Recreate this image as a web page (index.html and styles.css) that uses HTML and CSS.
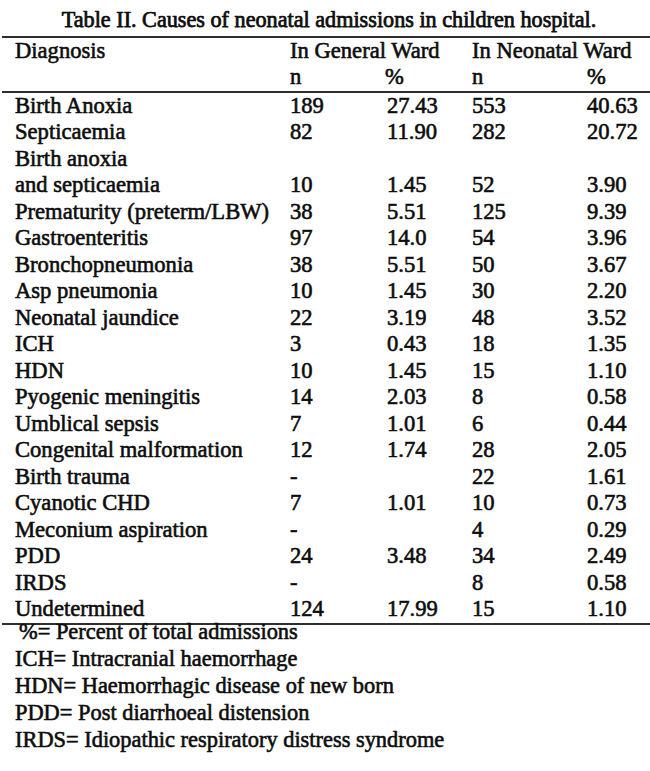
FILE: index.html
```html
<!DOCTYPE html>
<html>
<head>
<meta charset="utf-8">
<link rel="stylesheet" href="styles.css">
</head>
<body>
<div class="page">
  <h1 class="title">Table II. Causes of neonatal admissions in children hospital.</h1>
  <table class="data">
    <colgroup>
      <col class="c1"><col class="c2"><col class="c3"><col class="c4"><col class="c5">
    </colgroup>
    <thead>
      <tr><td class="diag">Diagnosis</td><td colspan="2">In General Ward</td><td colspan="2" class="nw">In Neonatal Ward</td></tr>
      <tr class="sub"><td class="diag"></td><td>n</td><td class="pct">%</td><td class="nw">n</td><td class="pct2">%</td></tr>
    </thead>
    <tbody>
      <tr><td class="diag">Birth Anoxia</td><td>189</td><td>27.43</td><td class="nw">553</td><td>40.63</td></tr>
      <tr><td class="diag">Septicaemia</td><td>82</td><td>11.90</td><td class="nw">282</td><td>20.72</td></tr>
      <tr><td class="diag">Birth anoxia</td><td></td><td></td><td></td><td></td></tr>
      <tr><td class="diag">and septicaemia</td><td>10</td><td>1.45</td><td class="nw">52</td><td>3.90</td></tr>
      <tr><td class="diag">Prematurity (preterm/LBW)</td><td>38</td><td>5.51</td><td class="nw">125</td><td>9.39</td></tr>
      <tr><td class="diag">Gastroenteritis</td><td>97</td><td>14.0</td><td class="nw">54</td><td>3.96</td></tr>
      <tr><td class="diag">Bronchopneumonia</td><td>38</td><td>5.51</td><td class="nw">50</td><td>3.67</td></tr>
      <tr><td class="diag">Asp pneumonia</td><td>10</td><td>1.45</td><td class="nw">30</td><td>2.20</td></tr>
      <tr><td class="diag">Neonatal jaundice</td><td>22</td><td>3.19</td><td class="nw">48</td><td>3.52</td></tr>
      <tr><td class="diag">ICH</td><td>3</td><td>0.43</td><td class="nw">18</td><td>1.35</td></tr>
      <tr><td class="diag">HDN</td><td>10</td><td>1.45</td><td class="nw">15</td><td>1.10</td></tr>
      <tr><td class="diag">Pyogenic meningitis</td><td>14</td><td>2.03</td><td class="nw">8</td><td>0.58</td></tr>
      <tr><td class="diag">Umblical sepsis</td><td>7</td><td>1.01</td><td class="nw">6</td><td>0.44</td></tr>
      <tr><td class="diag">Congenital malformation</td><td>12</td><td>1.74</td><td class="nw">28</td><td>2.05</td></tr>
      <tr><td class="diag">Birth trauma</td><td>-</td><td></td><td class="nw">22</td><td>1.61</td></tr>
      <tr><td class="diag">Cyanotic CHD</td><td>7</td><td>1.01</td><td class="nw">10</td><td>0.73</td></tr>
      <tr><td class="diag">Meconium aspiration</td><td>-</td><td></td><td class="nw">4</td><td>0.29</td></tr>
      <tr><td class="diag">PDD</td><td>24</td><td>3.48</td><td class="nw">34</td><td>2.49</td></tr>
      <tr><td class="diag">IRDS</td><td>-</td><td></td><td class="nw">8</td><td>0.58</td></tr>
      <tr><td class="diag">Undetermined</td><td>124</td><td>17.99</td><td class="nw">15</td><td>1.10</td></tr>
    </tbody>
  </table>
  <div class="notes">
    <p class="note first">%= Percent of total admissions</p>
    <p class="note">ICH= Intracranial haemorrhage</p>
    <p class="note">HDN= Haemorrhagic disease of new born</p>
    <p class="note">PDD= Post diarrhoeal distension</p>
    <p class="note">IRDS= Idiopathic respiratory distress syndrome</p>
  </div>
</div>
</body>
</html>
```
FILE: styles.css
```css
html, body {
  margin: 0;
  padding: 0;
  background: #ffffff;
}

body {
  font-family: "Liberation Serif", "Times New Roman", serif;
  color: #0d0d0d;
  -webkit-text-stroke: 0.6px #0d0d0d;
}

.page {
  width: 648px;
  padding-left: 2px;
}

.title {
  margin: 7px 0 2px 0;
  padding-left: 6px;
  font-size: 22.2px;
  font-weight: normal;
  line-height: 26.5px;
  text-align: center;
  -webkit-text-stroke: 0.75px #0d0d0d;
}

.data {
  width: 648px;
  border-collapse: collapse;
  table-layout: fixed;
  font-size: 22.6px;
  line-height: 26.5px;
}

.c1 { width: 288px; }
.c2 { width: 97px; }
.c3 { width: 85px; }
.c4 { width: 115px; }
.c5 { width: 63px; }

.data td {
  padding: 0;
  text-align: left;
  vertical-align: baseline;
  white-space: nowrap;
}

.data td.diag {
  padding-left: 13px;
}

.data td.pct {
  position: relative;
  left: -2px;
}

.data thead {
  border-top: 2px solid #2e2e2e;
  border-bottom: 2px solid #2e2e2e;
}

.data tbody {
  border-bottom: 2px solid #2e2e2e;
}

.notes {
  margin-top: -6.5px;
  font-size: 22.4px;
  line-height: 27px;
}

.note {
  margin: 0;
  padding-left: 13px;
  white-space: nowrap;
}

.note.first {
  padding-left: 17px;
}
```
